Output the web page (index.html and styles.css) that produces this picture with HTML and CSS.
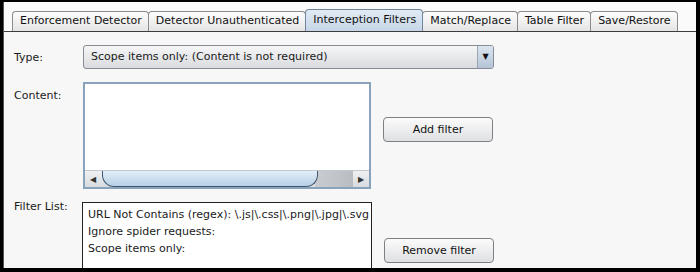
FILE: index.html
```html
<!DOCTYPE html>
<html lang="en">
<head>
  <meta charset="UTF-8" />
  <title>Interception Filters</title>
  <link rel="stylesheet" href="styles.css">
</head>
<body>
  <div class="window">
    <div class="tabs">
      <div class="tab">Enforcement Detector</div>
      <div class="tab">Detector Unauthenticated</div>
      <div class="tab active">Interception Filters</div>
      <div class="tab">Match/Replace</div>
      <div class="tab">Table Filter</div>
      <div class="tab">Save/Restore</div>
    </div>

    <div class="panel">
      <div class="row row-type">
        <span class="label">Type:</span>
        <div class="combo">
          <span class="combo-text">Scope items only: (Content is not required)</span>
          <span class="combo-arrow">▼</span>
        </div>
      </div>

      <div class="row row-content">
        <span class="label">Content:</span>
        <div class="textarea">
          <div class="text-body"></div>
          <div class="hscroll">
            <span class="sarrow">◀</span>
            <div class="track">
              <div class="thumb"></div>
            </div>
            <span class="sarrow">▶</span>
          </div>
        </div>
        <button class="btn btn-add">Add filter</button>
      </div>

      <div class="row row-list">
        <span class="label">Filter List:</span>
        <div class="list">
          <div class="item">URL Not Contains (regex): \.js|\.css|\.png|\.jpg|\.svg</div>
          <div class="item">Ignore spider requests:</div>
          <div class="item">Scope items only:</div>
        </div>
        <button class="btn btn-remove">Remove filter</button>
      </div>
    </div>
  </div>
</body>
</html>
```

FILE: styles.css
```css
* {
  margin: 0;
  padding: 0;
  box-sizing: border-box;
}

body {
  background: #000;
  width: 700px;
  height: 272px;
  overflow: hidden;
  font-family: 'DejaVu Sans', 'Liberation Sans', sans-serif;
  font-size: 11px;
  color: #1a1a1a;
}

.window {
  margin: 2px 4px 0 3px;
  height: 266px;
  background: #f7f7f7;
  border-left: 1px solid #555;
  overflow: hidden;
}

/* Tab strip */
.tabs {
  display: flex;
  align-items: flex-end;
  padding: 6px 0 0 8px;
  border-bottom: 1px solid #3c3c3c;
  height: 30px;
  background: #fafafa;
}

.tab {
  height: 20px;
  padding: 0 6px 0 7px;
  line-height: 18px;
  border: 1px solid #8c8c8c;
  border-bottom: none;
  border-radius: 4px 4px 0 0;
  background: linear-gradient(#fdfdfd, #e4e4e4);
  color: #111;
  white-space: nowrap;
  margin-right: -1px;
}

.tab.active {
  height: 22px;
  line-height: 20px;
  border-color: #6f86a0;
  background: linear-gradient(#e2ebf4, #c5d5e6);
  position: relative;
  z-index: 1;
}

/* Form panel */
.panel {
  padding: 13px 0 0 10px;
}

.row {
  display: flex;
}

.label {
  width: 69px;
  flex: none;
}

.row-type {
  align-items: center;
  height: 24px;
}

.combo {
  width: 411px;
  height: 24px;
  display: flex;
  border: 1px solid #878d94;
  border-radius: 3px;
  background: linear-gradient(#f6f6f7, #d9dbde);
  overflow: hidden;
}

.combo-text {
  flex: 1;
  padding-left: 7px;
  line-height: 22px;
}

.combo-arrow {
  width: 16px;
  border-left: 1px solid #9aa7b6;
  background: linear-gradient(#dce5ef, #b4c4d6);
  font-size: 8px;
  line-height: 22px;
  text-align: center;
  color: #111;
}

.row-content {
  margin-top: 13px;
}

.row-content .label {
  padding-top: 7px;
}

.textarea {
  width: 288px;
  height: 107px;
  border: 2px solid #8aa3bd;
  background: #fff;
  display: flex;
  flex-direction: column;
}

.text-body {
  flex: 1;
}

.hscroll {
  height: 17px;
  display: flex;
  align-items: center;
  background: linear-gradient(#eef0f2, #d8dbdf);
  border-top: 1px solid #c2c8cf;
}

.sarrow {
  width: 16px;
  font-size: 8px;
  text-align: center;
  color: #333;
}

.track {
  flex: 1;
  height: 100%;
  background: linear-gradient(90deg, transparent 85%, #c9ccd0 85%, #b9bcc0 100%);
}

.thumb {
  width: 216px;
  height: 16px;
  margin-left: 1px;
  border: 1px solid #40566e;
  border-top: none;
  border-radius: 0 0 12px 12px;
  background: linear-gradient(#e3eef8, #b7d0e6);
}

.btn {
  width: 110px;
  height: 25px;
  font-family: inherit;
  font-size: 11px;
  color: #111;
  border: 1px solid #7d8085;
  border-radius: 4px;
  background: linear-gradient(#fbfbfb, #dfe0e2);
}

.btn-add {
  margin: 35px 0 0 12px;
}

.row-list {
  margin-top: 13px;
}

.row-list .label {
  width: 68px;
  margin-top: -2px;
}

.list {
  width: 290px;
  height: 80px;
  border: 1px solid #222;
  background: #fff;
  padding: 3px 0 0 5px;
  overflow: hidden;
  white-space: nowrap;
}

.item {
  height: 17px;
  line-height: 17px;
}

.btn-remove {
  margin: 36px 0 0 12px;
}
```
